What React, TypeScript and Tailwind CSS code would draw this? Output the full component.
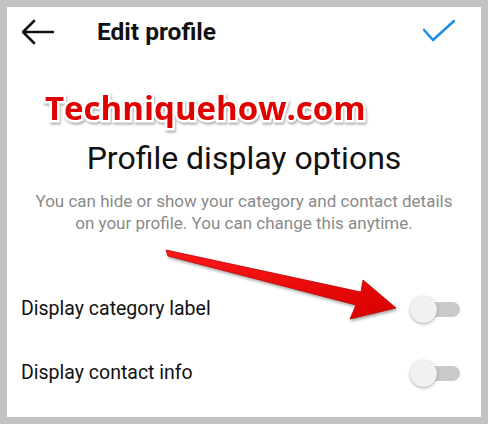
import React from "react";

const FONT = { fontFamily: "Roboto, 'Noto Sans', Arial, sans-serif" };

function Toggle() {
  return (
    <div className="relative w-[50px] h-[27px] shrink-0">
      <div className="absolute right-0 top-[6px] w-[36px] h-[15px] rounded-full bg-[#c9c9c9]" />
      <div className="absolute left-0 top-0 w-[27px] h-[27px] rounded-full bg-[#f1f1f1] shadow-[0_1px_3px_rgba(0,0,0,0.35)]" />
    </div>
  );
}

function Row({ label }: { label: string }) {
  return (
    <div className="flex items-center justify-between h-[64px] pl-[14px] pr-[21px]">
      <span className="text-[19.5px] text-[#111]">{label}</span>
      <Toggle />
    </div>
  );
}

export default function App() {
  return (
    <div className="w-[488px] h-[424px] bg-[#c3c3c3] p-[7px]" style={FONT}>
      <div className="relative w-full h-full bg-white flex flex-col overflow-hidden">
        {/* header */}
        <div className="flex items-center h-[50px] pl-[15px] pr-[26px]">
          <svg width="32" height="26" viewBox="0 0 32 26" className="shrink-0">
            <path d="M1 13 H31 M12 2 L1 13 L12 24" fill="none" stroke="#111" strokeWidth="2.6" strokeLinecap="round" strokeLinejoin="round" />
          </svg>
          <span className="ml-[43px] text-[24.5px] font-bold text-[#111]">Edit profile</span>
          <div className="flex-1" />
          <svg width="32" height="24" viewBox="0 0 32 24">
            <path d="M1 10 L10 20 L31 1" fill="none" stroke="#1e8fe6" strokeWidth="2.6" strokeLinecap="round" strokeLinejoin="round" />
          </svg>
        </div>

        <h1 className="mt-[82px] text-center text-[32px] leading-[38px] text-[#111] font-normal">
          Profile display options
        </h1>
        <p className="mt-[13px] px-[22px] text-center text-[17px] leading-[22px] text-[#8a8a8a]">
          You can hide or show your category and contact details on your profile. You can change this anytime.
        </p>

        <div className="mt-[43px]">
          <Row label="Display category label" />
          <Row label="Display contact info" />
        </div>

        {/* watermark */}
        <div
          className="absolute left-[38px] top-[76px] text-[33px] font-bold text-[#e10000] [paint-order:stroke_fill] [-webkit-text-stroke:5px_#fff] drop-shadow-[1px_2px_1px_rgba(0,0,0,0.3)]"
          style={{ fontFamily: "'Open Sans', 'Noto Sans', sans-serif" }}
        >
          Techniquehow.com
        </div>

        {/* red arrow */}
        <svg className="absolute left-0 top-0 pointer-events-none" width="474" height="410" viewBox="7 7 474 410">
          <defs>
            <linearGradient id="ar" x1="0" y1="0" x2="1" y2="1">
              <stop offset="0" stopColor="#ff1a1a" />
              <stop offset="1" stopColor="#d80000" />
            </linearGradient>
          </defs>
          <path
            d="M166 250 L361 292 L363 280 L396 308 L350 319 L356 305 L168 256 Z"
            fill="url(#ar)"
            stroke="#c00000"
            strokeWidth="0.8"
            strokeLinejoin="round"
            style={{ filter: "drop-shadow(1px 2px 1.5px rgba(0,0,0,0.35))" }}
          />
        </svg>
      </div>
    </div>
  );
}
